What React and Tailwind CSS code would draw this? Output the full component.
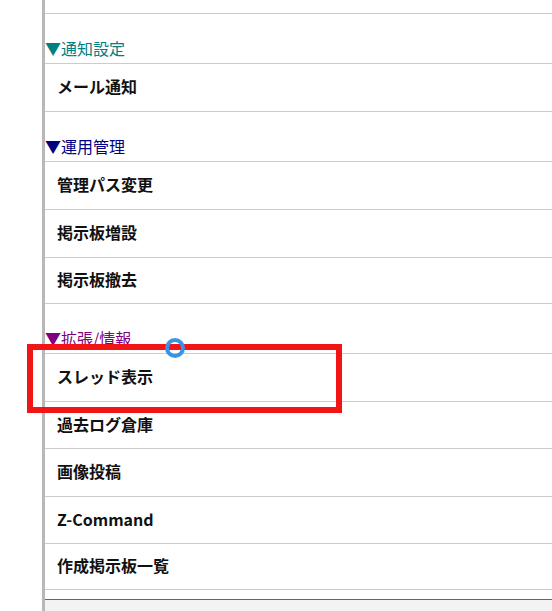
import React from "react";

const font = { fontFamily: '"Noto Sans CJK JP", "Noto Sans", sans-serif' };

function Header({ children, color, h }) {
  return (
    <div
      className={`flex items-end border-b border-[#cccccc] pb-[5px] text-[16px] leading-[20px] ${h} ${color}`}
    >
      <span>▼{children}</span>
    </div>
  );
}

function Item({ children, h }) {
  return (
    <div
      className={`flex items-center border-b border-[#cccccc] pb-[3px] pl-[12px] text-[16px] font-bold leading-[20px] text-[#111111] ${h}`}
    >
      {children}
    </div>
  );
}

export default function App() {
  return (
    <div className="relative h-[611px] w-[552px] overflow-hidden bg-white" style={font}>
      <div className="ml-[42px] flex h-full flex-col border-l-[3px] border-[#b8b8b8]">
        <div className="h-[14px] border-b border-[#cccccc]" />
        <Header color="text-[#008080]" h="h-[50px]">通知設定</Header>
        <Item h="h-[48px]">メール通知</Item>
        <Header color="text-[#000080]" h="h-[50px]">運用管理</Header>
        <Item h="h-[48px]">管理パス変更</Item>
        <Item h="h-[48px]">掲示板増設</Item>
        <Item h="h-[46px]">掲示板撤去</Item>
        <Header color="text-[#800080]" h="h-[50px]">拡張/情報</Header>
        <Item h="h-[48px]">スレッド表示</Item>
        <Item h="h-[47px]">過去ログ倉庫</Item>
        <Item h="h-[48px]">画像投稿</Item>
        <Item h="h-[47px]">Z-Command</Item>
        <Item h="h-[46px]">作成掲示板一覧</Item>
        <div className="h-[9px]" />
        <div className="flex-1 border-t border-[#666666] bg-[#f3f3f3]" />
      </div>
      <div className="absolute left-[27px] top-[344px] h-[69px] w-[315px] border-[6px] border-[#f21515]" />
      <div className="absolute left-[165px] top-[338px] h-[20px] w-[20px] rounded-full border-[4px] border-[#3b93e6]" />
    </div>
  );
}
